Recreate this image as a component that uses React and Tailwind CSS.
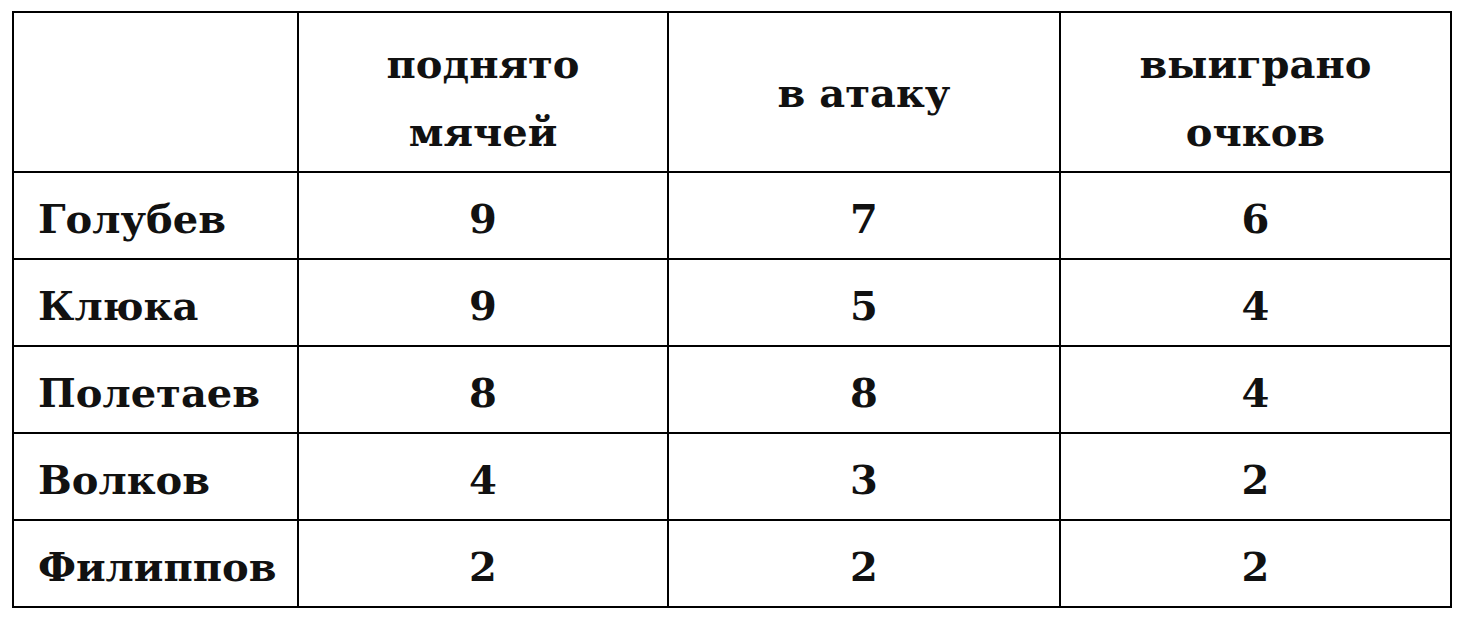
const rows = [
  ["Голубев", 9, 7, 6],
  ["Клюка", 9, 5, 4],
  ["Полетаев", 8, 8, 4],
  ["Волков", 4, 3, 2],
  ["Филиппов", 2, 2, 2],
];

export default function App() {
  return (
    <div className="w-[1460px] h-[617px] bg-white pt-[11px] pl-[12px] font-['DejaVu_Serif',serif] text-[#111]">
      <table className="border-collapse border-2 border-black w-[1438px] table-fixed">
        <colgroup>
          <col className="w-[285px]" />
          <col className="w-[370px]" />
          <col className="w-[392px]" />
          <col className="w-[391px]" />
        </colgroup>
        <thead>
          <tr className="h-[160px]">
            <th className="border-2 border-black"></th>
            <th className="border-2 border-black text-[40px] font-bold leading-[68px] pt-[12px]">
              поднято
              <br />
              мячей
            </th>
            <th className="border-2 border-black text-[40px] font-bold leading-[68px] pt-[2px]">
              в атаку
            </th>
            <th className="border-2 border-black text-[40px] font-bold leading-[68px] pt-[12px]">
              выиграно
              <br />
              очков
            </th>
          </tr>
        </thead>
        <tbody>
          {rows.map((r) => (
            <tr key={r[0]} className="h-[87px]">
              <td className="border-2 border-black pl-[24px] pt-[6px] text-[40px] font-bold">{r[0]}</td>
              <td className="border-2 border-black text-center pt-[6px] text-[40px] font-bold">{r[1]}</td>
              <td className="border-2 border-black text-center pt-[6px] text-[40px] font-bold">{r[2]}</td>
              <td className="border-2 border-black text-center pt-[6px] text-[40px] font-bold">{r[3]}</td>
            </tr>
          ))}
        </tbody>
      </table>
    </div>
  );
}
